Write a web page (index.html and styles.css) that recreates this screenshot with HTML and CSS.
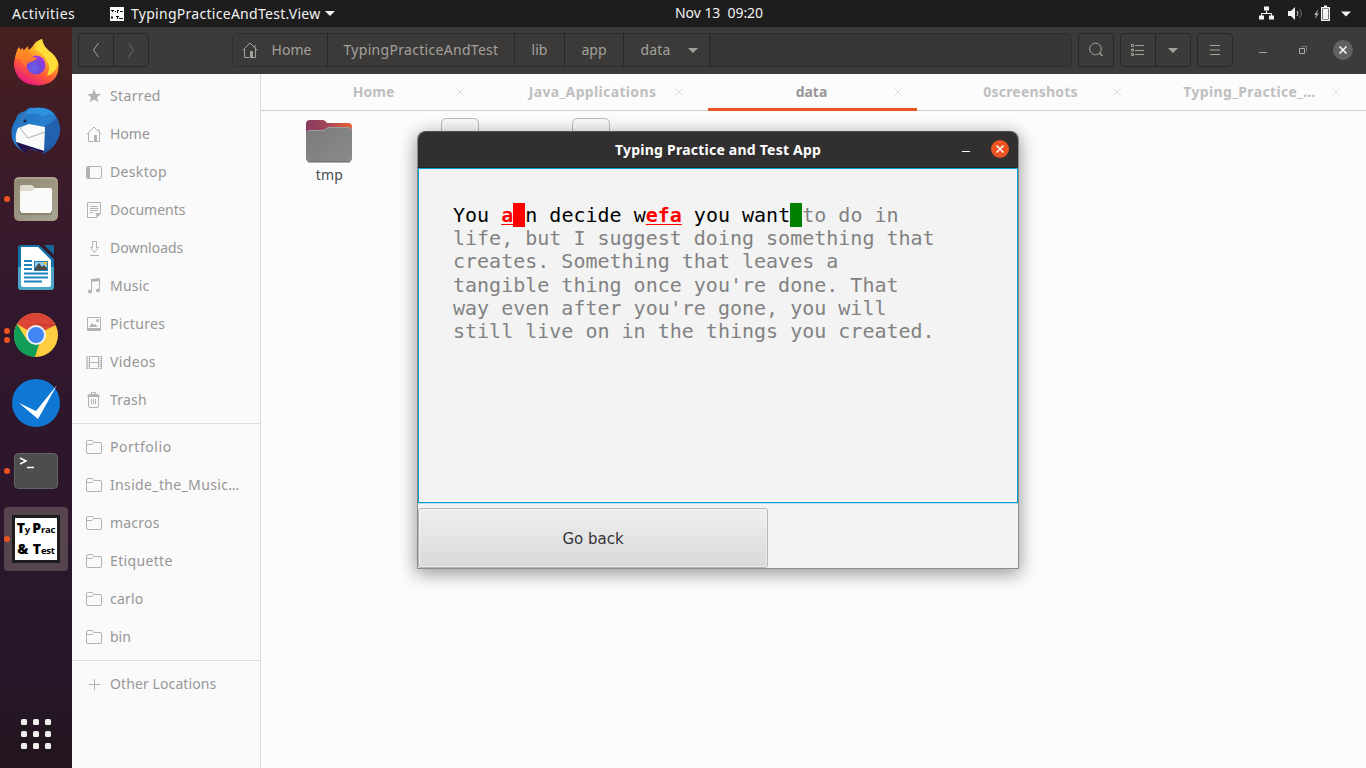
FILE: index.html
```html
<!DOCTYPE html>
<html lang="en">
<head>
<meta charset="utf-8">
<title>Desktop</title>
<link rel="stylesheet" href="styles.css">
</head>
<body>
<svg class="defs" aria-hidden="true">
  <defs>
    <linearGradient id="ffBody" x1="0.8" y1="0" x2="0.25" y2="1"><stop offset="0" stop-color="#fff044"/><stop offset="0.35" stop-color="#ffb02a"/><stop offset="0.65" stop-color="#ff5a36"/><stop offset="1" stop-color="#e5128c"/></linearGradient>
    <radialGradient id="ffGlobe" cx="0.4" cy="0.65" r="0.7"><stop offset="0" stop-color="#6464ee"/><stop offset="0.6" stop-color="#7544d6"/><stop offset="1" stop-color="#b833e1"/></radialGradient>
    <linearGradient id="ffFox" x1="0" y1="0" x2="0" y2="1"><stop offset="0" stop-color="#ff9a1e"/><stop offset="1" stop-color="#ff6a30"/></linearGradient>
    <linearGradient id="tb" x1="0" y1="0" x2="1" y2="1"><stop offset="0" stop-color="#1b6dbd"/><stop offset="0.5" stop-color="#2a80cf"/><stop offset="1" stop-color="#1c3f8e"/></linearGradient>
    <linearGradient id="fileBg" x1="0" y1="0" x2="1" y2="1"><stop offset="0" stop-color="#8e8773"/><stop offset="1" stop-color="#aaa592"/></linearGradient>
    <linearGradient id="fold" x1="0" y1="0" x2="1" y2="0"><stop offset="0" stop-color="#893a62"/><stop offset="0.45" stop-color="#a2475a"/><stop offset="1" stop-color="#ea6035"/></linearGradient>
    <linearGradient id="foldFront" x1="0" y1="0" x2="1" y2="1"><stop offset="0" stop-color="#7a7a7a"/><stop offset="1" stop-color="#8b8b8b"/></linearGradient>
    <symbol id="i-home" viewBox="0 0 16 16"><path d="M.7 8.300 8 1l7.300 7.300M2.500 7v8.500h4.700M10.200 15.500h3.300V7M13 3v3" fill="none" stroke="currentColor"/><path d="M8 9h3v7H8z" fill="currentColor"/></symbol>
    <symbol id="i-folder" viewBox="0 0 16 16"><path d="M.5 3q0-1.500 1.500-1.500h4.500l1.500 2h6q1.500 0 1.500 1.500v8q0 1.500-1.500 1.500H2q-1.500 0-1.500-1.500zM.7 5.500H6l2-2" fill="none" stroke="currentColor"/></symbol>
    <symbol id="i-x" viewBox="0 0 8 8"><path d="M.4.4l7.200 7.200M7.600.4L.4 7.600" fill="none" stroke="currentColor"/></symbol>
    <symbol id="i-close" viewBox="0 0 8 8"><path d="M.5.5l7 7M7.500.5l-7 7" fill="none" stroke="currentColor" stroke-width="1.500"/></symbol>
  </defs>
</svg>

<header class="topbar">
  <span class="activities">Activities</span>
  <svg class="app-mini" width="14" height="14" viewBox="0 0 14 14"><path fill="#fff" d="M0 0h14v14H0z"/><path d="M1 3.500h3M2.500 4v1M5 4.500h1M7 3.500h2M7.500 4v2M10 4.500h3M1 10.500h2M2 9v3M6 9.500h3M7.500 10v2M9 11.500h4" stroke="#111" fill="none"/></svg>
  <span class="app-name">TypingPracticeAndTest.View</span>
  <svg class="tri" width="10" height="5"><path d="M0 0h10L5 5z" fill="#f2f2f2"/></svg>
  <span class="clock">Nov 13&nbsp; 09:20</span>
  <svg class="tray" width="96" height="18" viewBox="0 0 96 18" fill="#f2f2f2">
    <path d="M6 1.500h5v4H6zM1 10.500h5v4H1zM11 10.500h5v4h-5z"/><path d="M8.500 5.500v3M3.500 11.500v-3h10v3" fill="none" stroke="#f2f2f2"/>
    <path d="M30 6h3l4-4v13l-4-4h-3z"/><path d="M39 6q2 2.500 0 5" fill="none" stroke="#ddd"/><path d="M41.500 4q3.500 4.500 0 9" fill="none" stroke="#777"/>
    <path d="M60.500 4l-4.500 6h2l-1 4 4-5.500h-2z" fill="#aaa"/><path d="M63.700 2.700h7.600v12.600h-7.600z" fill="none" stroke="#f2f2f2" stroke-width="1.400"/><path d="M65 4h5v10h-5zM66 .5h3v2h-3zM83 6.500h10l-5 5z"/>
  </svg>
</header>

<div class="desktop">
  <nav class="dock">
    <svg class="dock-item" viewBox="0 0 72 64">
      <path d="M18 25q1-6 5-8l1 5 5-3 4-4q2-5 9-7 1 7 7 12 7 4 9.500 13 1 20-20 21.500Q17 54 14 35q-.5-6 4-17z" fill="url(#ffBody)"/>
      <path d="M42 8q1 7 7 12 7 5 9 12-2 10-11 13 4-8 0-15-3-7-12-12 2-8 7-10z" fill="#ffde3a"/>
      <circle cx="36" cy="34" r="9.500" fill="url(#ffGlobe)"/>
      <path d="M15 28q1-8 4-12l3 5 6-6 1 7q3 0 4 4l4 1q-2 3-7 4-4 2-4 5-4-3-5-8z" fill="url(#ffFox)"/>
    </svg>
    <svg class="dock-item" viewBox="0 0 72 64">
      <path d="M25 12q4-5 9-3 17-3 23 10 7 14-2 26-6 8-13 10l2-4-7 1-14-4 1 5Q9 45 12 29q1-5 4-9 1-6 9-8z" fill="url(#tb)"/>
      <path d="M34 9q13-2 21 7-8-3-12 2-7-6-19-1 2-7 10-8z" fill="#2e91dd"/>
      <path d="M18 29l11-4 16 3-1 24-28-9q-1-8 2-14z" fill="#fafafa"/><path d="M20 29l8 10 17-6" fill="none" stroke="#aab0b8"/>
      <path d="M16 43l28 9-1 2q-8-4-14-4-4 0-1 5-8-3-12-12z" fill="#24104c"/>
      <path d="M45 27q8-3 12-8l2 12q0 12-9 20l2-7-6 5z" fill="#2161ae"/><path d="M24 13q3 1 4 2-5 4-7 14l-2-5q1-8 5-11z" fill="#3579bd"/><circle cx="25" cy="22" r="1.500" fill="#172648"/>
    </svg>
    <div class="dock-slot"><i class="dot"></i><svg class="dock-item" viewBox="0 0 72 64">
      <rect x="14" y="10" width="44" height="44" rx="5" fill="url(#fileBg)"/><path d="M15 14q0-3 4-3h34q4 0 4 3" stroke="#bab5a3" fill="none"/>
      <path d="M20 20q0-2 2-2h10l3 3v6H20z" fill="#dedad0"/><path d="M20 26q0-2 2-2h10l3-3h15q2 0 2 2v21q0 2-2 2H22q-2 0-2-2z" fill="#fafaf8"/><path d="M20 44q0 3 2 3h28q2 0 2-3" fill="none" stroke="#706b5d"/>
    </svg></div>
    <svg class="dock-item" viewBox="0 0 72 64">
      <path d="M21 10h18l15 14v27q0 4-3 4H21q-3 0-3-4V13q0-3 3-3z" fill="#1171a8"/><path d="M18 32h36v19q0 4-3 4H21q-3 0-3-4z" fill="#4ba6ca"/><path d="M44 10h10v10z" fill="#176897"/>
      <path d="M21 12h17l13 13v25q0 2-2 2H23q-2 0-2-2z" fill="#fff"/><path d="M24 26h8M24 30h8M24 34h8M24 38.500h24M24 42.500h24M24 46.500h18" stroke="#1c83bb" stroke-width="2"/>
      <path d="M34 26h14v10H34z" fill="#1c83bb"/><path d="M35 27h12v8H35z" fill="#8cc9e8"/><path d="M35 35v-2l4-5 3 4 2-2 3 3v2z" fill="#4a4a48"/><path d="M43 27h4v4z" fill="#f8bd2c"/>
    </svg>
    <div class="dock-slot"><i class="dot two"></i><svg class="dock-item" viewBox="0 0 72 64">
      <circle cx="36" cy="32" r="22" fill="#ffcd40"/><path d="M36 32L17 21Q23 10 36 10t19.500 12z" fill="#db4437"/><path d="M17 21l10 16 12 4-4 13Q20 53 15 40q-3-10 2-19z" fill="#0f9d58"/><path d="M36 22h19.500" stroke="#b9362c"/>
      <circle cx="36" cy="32" r="10" fill="#f1f1f1"/><circle cx="36" cy="32" r="8" fill="#4285f4"/>
    </svg></div>
    <svg class="dock-item" viewBox="0 0 72 64"><circle cx="36" cy="32" r="24" fill="#0f78d4"/><path d="M19 32l17 8 21-26-19 34z" fill="#fff"/></svg>
    <div class="dock-slot"><i class="dot"></i><svg class="dock-item" viewBox="0 0 72 64"><rect x="14.500" y="14.500" width="43" height="35" rx="4" fill="#4d4d4d" stroke="#656565"/><path d="M20 19l6 3-6 3M27 28.500h7" fill="none" stroke="#fff" stroke-width="1.500"/></svg></div>
    <div class="dock-slot active"><i class="dot"></i><div class="typ"><span><b>T</b>y <b>P</b>rac</span><span><b>&amp;</b>&nbsp; <b>T</b>est</span></div></div>
    <div class="grid-btn"><i></i><i></i><i></i><i></i><i></i><i></i><i></i><i></i><i></i></div>
  </nav>

  <main class="files">
    <div class="headerbar">
      <div class="group nav"><span><svg width="8" height="16"><path d="M6.500 1L1.500 8l5 7" fill="none" stroke="currentColor"/></svg></span><span class="dim"><svg width="8" height="16"><path d="M1.500 1l5 7-5 7" fill="none" stroke="currentColor"/></svg></span></div>
      <div class="path">
        <span class="p-home"><svg width="16" height="16"><use href="#i-home"/></svg>Home</span><span class="p-app">TypingPracticeAndTest</span><span class="p-lib">lib</span><span class="p-ap">app</span><span class="p-data">data<svg width="10" height="5"><path d="M0 0h10L5 5z" fill="currentColor"/></svg></span>
      </div>
      <div class="group"><span><svg width="16" height="16"><circle cx="7.500" cy="7" r="5.800" fill="none" stroke="currentColor"/><path d="M11.500 11l3 3" stroke="currentColor" stroke-width="1.500"/></svg></span></div>
      <div class="group"><span><svg width="14" height="12"><path d="M4 1.500h9M4 6.500h9M4 10.500h9" stroke="currentColor"/><path d="M.5.5h2v2h-2zM.5 5h2v2h-2zM.5 9.500h2v2h-2z" fill="none" stroke="currentColor"/></svg></span><span><svg width="10" height="5"><path d="M0 0h10L5 5z" fill="currentColor"/></svg></span></div>
      <div class="group"><span><svg width="12" height="10"><path d="M1 .5h10M1 5h10M1 9.500h10" stroke="currentColor"/></svg></span></div>
      <div class="wm"><svg width="8" height="8"><path d="M0 6.500h8" stroke="currentColor"/></svg><svg width="8" height="8"><path d="M.5 2.500h5v5h-5z" fill="none" stroke="#aaa"/><path d="M2.500.5h5v5" fill="none" stroke="#777"/></svg><span class="wm-close"><svg width="8" height="8"><use href="#i-close"/></svg></span></div>
    </div>
    <div class="files-body">
      <aside class="sidebar">
        <div class="row"><svg viewBox="0 0 16 16"><path d="M8 1l1.900 4.900 5.100.2-4 3.200 1.400 5L8 11.500l-4.400 2.800 1.400-5-4-3.200 5.100-.2z" fill="currentColor"/></svg><span class="loose">Starred</span></div>
        <div class="row"><svg><use href="#i-home"/></svg><span>Home</span></div>
        <div class="row"><svg viewBox="0 0 16 16"><rect x=".5" y="2.500" width="15" height="12" rx="1.500" fill="none" stroke="currentColor"/><path d="M1 3h3v11H1z" fill="currentColor"/></svg><span class="loose">Desktop</span></div>
        <div class="row"><svg viewBox="0 0 16 16"><path d="M1.500.5h13v11l-4 4h-9zM4 4.500h8M4 6.500h8M4 8.500h8M4 10.500h3" fill="none" stroke="currentColor"/><path d="M10 11h5l-4.500 5z" fill="currentColor"/></svg><span>Documents</span></div>
        <div class="row"><svg viewBox="0 0 16 16"><path d="M6.500 1.500h4v6h2l-4 5-4-5h2zM4 15.500h9" fill="none" stroke="currentColor"/></svg><span>Downloads</span></div>
        <div class="row"><svg viewBox="0 0 16 16"><path d="M5.500 13V2h8v10" fill="none" stroke="currentColor"/><path d="M5 1l9-1v3L5 4z" fill="currentColor"/><circle cx="4" cy="13.500" r="2" fill="currentColor"/><circle cx="12" cy="12.500" r="2" fill="currentColor"/></svg><span class="mid">Music</span></div>
        <div class="row"><svg viewBox="0 0 16 16"><path d="M1.500 1.500h13v13h-13z" fill="none" stroke="currentColor"/><path d="M1 12h14v3H1zM3 11l3-4 2 2 1-1 3 3z" fill="currentColor"/><circle cx="11.500" cy="4.500" r="1.500" fill="currentColor"/></svg><span class="loose">Pictures</span></div>
        <div class="row"><svg viewBox="0 0 16 16"><path d="M3.500 2.500h9v12h-9zM3 8.500h10" fill="none" stroke="currentColor"/><path d="M1.500 2v13M14.500 2v13" stroke="currentColor" stroke-width="2" stroke-dasharray="1 1"/><path d="M1 2v13M15.500 2v13" stroke="currentColor"/></svg><span class="loose">Videos</span></div>
        <div class="row"><svg viewBox="0 0 16 16"><path d="M2.500 5v9q0 1.500 1.500 1.500h7q1.500 0 1.500-1.500V5M5.500 7v5M7.500 7v5M9.500 7v5M5.500 3V.5h4V3" fill="none" stroke="currentColor"/><path d="M1 5q1-3 3-3h7q2 0 3 3z" fill="currentColor"/></svg><span class="mid">Trash</span></div>
        <hr>
        <div class="row"><svg><use href="#i-folder"/></svg><span class="wide">Portfolio</span></div>
        <div class="row"><svg><use href="#i-folder"/></svg><span class="loose">Inside_the_Music…</span></div>
        <div class="row"><svg><use href="#i-folder"/></svg><span class="mid">macros</span></div>
        <div class="row"><svg><use href="#i-folder"/></svg><span class="loose">Etiquette</span></div>
        <div class="row"><svg><use href="#i-folder"/></svg><span class="mid">carlo</span></div>
        <div class="row"><svg><use href="#i-folder"/></svg><span>bin</span></div>
        <hr>
        <div class="row"><svg viewBox="0 0 16 16"><path d="M3 8.500h11M8.500 3v11" stroke="currentColor"/></svg><span class="slight">Other Locations</span></div>
      </aside>
      <section class="content">
        <div class="tabs">
          <div class="tab"><span>Home</span><svg><use href="#i-x"/></svg></div>
          <div class="tab"><span class="loose">Java_Applications</span><svg><use href="#i-x"/></svg></div>
          <div class="tab current"><span>data</span><svg><use href="#i-x"/></svg></div>
          <div class="tab"><span class="mid">0screenshots</span><svg><use href="#i-x"/></svg></div>
          <div class="tab"><span class="loose">Typing_Practice_…</span><svg><use href="#i-x"/></svg></div>
        </div>
        <div class="icons">
          <div class="folder"><svg width="46" height="43" viewBox="0 0 46 43"><path d="M0 4q0-4 4-4h13q2 0 4 3h21q4 0 4 4v14H0z" fill="url(#fold)"/><path d="M0 14q0-4 4-4h13q2 0 5-3h20q4 0 4 4v27q0 4-4 4H4q-4 0-4-4z" fill="url(#foldFront)"/><path d="M1 12q1-1.500 3-1.500h13q2 0 5-3h20q3 0 3.500 3" fill="none" stroke="#aaa" stroke-width=".7"/><path d="M2 42h42" stroke="#666"/></svg><span>tmp</span></div>
          <div class="doc"></div><div class="doc"></div>
        </div>
      </section>
    </div>
  </main>
</div>

<div class="dialog">
  <div class="titlebar"><span class="title">Typing Practice and Test App</span><i class="min"></i><span class="close"><svg width="8" height="8"><use href="#i-close"/></svg></span></div>
  <div class="practice"><span class="typed">You <b>a</b><i class="block bad"> </i>n decide w<b>efa</b> you want<i class="block ok"> </i></span>to do in
life, but I suggest doing something that
creates. Something that leaves a
tangible thing once you're done. That
way even after you're gone, you will
still live on in the things you created.</div>
  <div class="back">Go back</div>
</div>
</body>
</html>
```

FILE: styles.css
```css
* { box-sizing: border-box; }
body { margin: 0; width: 1366px; height: 768px; overflow: hidden; display: flex; flex-direction: column; font-family: "Noto Sans", "Open Sans", sans-serif; font-size: 14px; background: #1d1d1d; }
svg { display: block; flex: none; }
.defs { position: absolute; width: 0; height: 0; }
i { font-style: normal; }
.slight { letter-spacing: .1px; }
.mid { letter-spacing: .2px; }
.loose { letter-spacing: .35px; }
.wide { letter-spacing: .55px; }

.topbar { height: 27px; flex: none; display: flex; align-items: center; background: #1d1d1d; color: #f2f2f2; position: relative; white-space: nowrap; padding-left: 12px; }
.activities { width: 98px; letter-spacing: .5px; }
.app-mini { margin-right: 7px; }
.app-name { width: 190px; letter-spacing: .28px; }
.tri { margin-left: 4px; }
.clock { position: absolute; left: 675px; top: 3px; letter-spacing: -.05px; }
.tray { margin-left: auto; margin-right: 12px; }

.desktop { flex: 1; display: flex; min-height: 0; }
.dock { width: 72px; flex: none; display: flex; flex-direction: column; gap: 4px; padding-top: 4px; background: linear-gradient(#47201f, #3b1b29 20%, #31172d 38%, #2c162b 65%, #26172a 86%, #22151d); }
.dock-item { width: 72px; height: 64px; }
.dock-slot { height: 64px; position: relative; }
.dot { position: absolute; left: 4px; top: 29px; width: 6px; height: 6px; border-radius: 50%; background: #e95420; }
.dot.two { top: 25px; box-shadow: 0 9px #e95420; }
.active { margin: 0 4px; border-radius: 4px; background: #56444f; padding: 8px; }
.active .dot { left: 0; }
.typ { width: 48px; height: 48px; border: 3px solid #1c1c1c; background: #fff; color: #000; font: bold 9.5px/20px "Open Sans", "DejaVu Sans", sans-serif; white-space: nowrap; display: flex; flex-direction: column; align-items: center; }
.typ b { font-size: 14px; }
.typ span { height: 21px; letter-spacing: -.2px; }
.grid-btn { margin: auto auto 19px; display: grid; grid-template-columns: repeat(3, 6px); gap: 6px; }
.grid-btn i { height: 6px; border-radius: 1.5px; background: #f1f0ee; }

.files { flex: 1; display: flex; flex-direction: column; min-width: 0; }
.headerbar { height: 47px; flex: none; display: flex; align-items: center; gap: 6px; padding: 0 13px 1px 6px; background: #3d3b39; color: #a3a19e; }
.group { display: flex; height: 34px; border: 1px solid #282725; border-radius: 4px; }
.group span { width: 34px; display: flex; align-items: center; justify-content: center; }
.group span + span { width: 35px; border-left: 1px solid #282725; }
.nav { margin-right: 77px; }
.group .dim { color: #6d6b69; }
.path { width: 840px; height: 34px; display: flex; border: 1px solid #2f2e2c; border-radius: 4px; background: #383634; }
.path span { display: flex; align-items: center; justify-content: center; padding-bottom: 2px; border-right: 1px solid #282725; background: #3c3a38; }
.path .p-home { width: 95px; gap: 14px; padding-right: 7px; }
.p-home svg { margin-top: 1px; }
.p-app { width: 187px; letter-spacing: .3px; }
.p-lib { width: 50px; }
.p-ap { width: 59px; }
.path .p-data { width: 86px; gap: 17px; padding-left: 5px; letter-spacing: .2px; }
.p-data svg { margin-top: 2px; }
.wm { margin-left: auto; display: flex; align-items: center; gap: 32px; }
.wm-close { width: 20px; height: 20px; margin-left: -6px; border-radius: 50%; background: #636160; color: #fff; display: flex; align-items: center; justify-content: center; }

.files-body { flex: 1; display: flex; }
.sidebar { width: 189px; flex: none; border-right: 1px solid #dbdbdb; background: #fafafa; color: #969696; padding-top: 3px; }
.row { height: 38px; display: flex; align-items: center; gap: 8px; padding-left: 14px; white-space: nowrap; }
.row span { padding-bottom: 2px; }
.row svg { width: 16px; height: 16px; color: #b3b3b3; }
.sidebar hr { margin: 4px 0; border: 0; height: 1px; background: #dcdcdc; }
.content { flex: 1; min-width: 0; background: #fcfcfc; }
.tabs { height: 37px; display: flex; gap: 10px; padding-left: 9px; border-bottom: 1px solid #cdcdcd; }
.tab { width: 209px; height: 37px; flex: none; display: grid; grid-template-columns: 14px 1fr 8px 15px; align-items: center; font-weight: bold; color: #bfbfbf; text-align: center; white-space: nowrap; border-bottom: 3px solid transparent; }
.tab.current { border-bottom-color: #e95420; color: #969696; }
.tab span { grid-column: 2; padding-left: 7px; }
.tab svg { width: 8px; height: 8px; margin-top: 1px; color: #dcdcdc; }
.icons { display: flex; padding-left: 45px; }
.folder { width: 46px; margin-top: 9px; display: flex; flex-direction: column; align-items: center; gap: 2px; color: #4c4c4c; }
.folder span { padding-left: 1px; letter-spacing: .2px; }
.doc { width: 38px; height: 50px; margin: 7px 0 0 89px; border: 1px solid #bbb; border-radius: 5px; background: #fafafa; }
.doc + .doc { margin-left: 93px; }

.dialog { position: absolute; left: 417px; top: 131px; width: 602px; height: 438px; border: 1px solid #8c8c8c; border-top: 0; border-radius: 8px 8px 0 0; background: #f3f3f3; box-shadow: 0 4px 18px 1px rgba(0,0,0,.4); display: flex; flex-direction: column; }
.titlebar { height: 37px; flex: none; display: flex; align-items: center; padding-right: 9px; border-radius: 8px 8px 0 0; background: #322f30; border-top: 1px solid #535051; border-bottom: 1px solid #222; color: #fff; font-weight: bold; }
.title { margin-left: 197px; width: 206px; white-space: nowrap; letter-spacing: .23px; }
.min { width: 8px; height: 1px; margin: 4px 0 0 141px; background: #fff; }
.close { width: 18px; height: 18px; border-radius: 50%; margin: 0 0 2px auto; background: #e95420; display: flex; align-items: center; justify-content: center; }
.practice { height: 335px; border: 1px solid #039ed3; padding: 35px 0 0 34px; color: #828282; font: 20px/23.2px "DejaVu Sans Mono", monospace; white-space: pre; box-shadow: 0 1px #b5e0ef; }
.typed { color: #000; }
.typed b { color: red; text-decoration: underline; text-decoration-thickness: 1px; text-underline-offset: 2px; }
.block.bad { background: red; }
.block.ok { background: green; }
.back { width: 350px; height: 60px; margin-top: 5px; padding-top: 2px; border: 1px solid #b4b4b4; border-radius: 3px; background: linear-gradient(#efefef, #d9d9d9); box-shadow: inset 0 0 0 1px rgba(255,255,255,.5); display: flex; align-items: center; justify-content: center; color: #333; font: 15px "DejaVu Sans", sans-serif; }
```
